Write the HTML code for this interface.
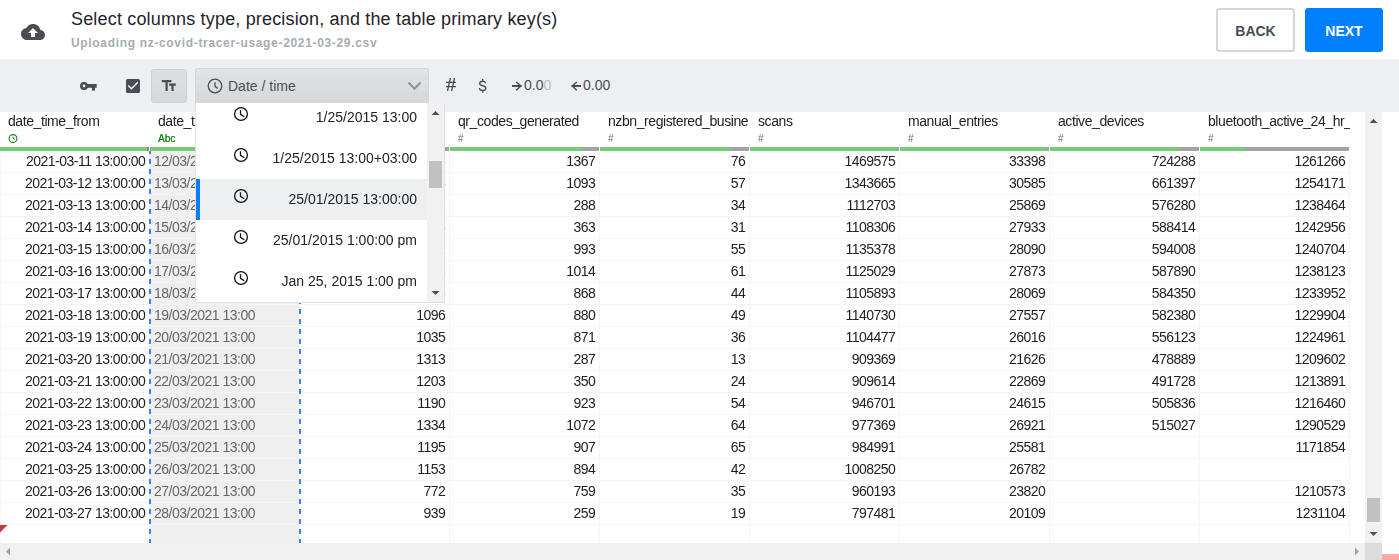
<!DOCTYPE html>
<html><head><meta charset="utf-8"><style>
*{box-sizing:border-box}
html,body{margin:0;padding:0}
body{width:1399px;height:560px;overflow:hidden;position:relative;background:#fff;font-family:"Liberation Sans",sans-serif;color:#222}
.a{position:absolute}
.title{left:71px;top:9px;font-size:18px;letter-spacing:0.17px;color:#1f232b;white-space:nowrap;line-height:20px}
.sub{left:71px;top:35px;font-size:12px;font-weight:bold;letter-spacing:0.67px;color:#a7acb4;white-space:nowrap;line-height:16px}
.btn{top:8px;height:44px;width:79px;border-radius:3px;font-size:14px;font-weight:bold;text-align:center;line-height:42px}
.back{left:1216px;border:2px solid #d3d6dc;color:#474c55;background:#fff}
.next{left:1305px;width:78px;background:#007fff;color:#fff;line-height:46px}
.tb{left:0;top:59px;width:1399px;height:53px;background:#eeeff2;border-top:1px solid #f0f3f6}
.hd{top:112px;height:35px;width:150px;background:#fff;overflow:hidden}
.hn{position:absolute;left:8px;top:1px;font-size:14px;letter-spacing:-0.42px;line-height:16px;white-space:nowrap;color:#222}
.ht{position:absolute;left:8px;top:20px;font-size:10px;line-height:12px;color:#6f6f6f}
.bar{top:147px;height:4px}
.cell{height:22px;width:150px;border-right:1px solid #f4f4f4;border-bottom:1px solid #f4f4f4;font-size:14px;letter-spacing:-0.5px;line-height:21px;white-space:nowrap;overflow:hidden;padding:0 3.6px 0 4px;text-align:right;color:#222}
.c2{background:#efefef;color:#666;text-align:left;padding-left:4px}
.mi{left:196px;width:231px;height:41px;}
.mt{position:absolute;right:10px;top:12px;font-size:14px;line-height:16px;color:#222;white-space:nowrap}
</style></head><body>

<svg class="a" style="left:21px;top:20px" width="24" height="24" viewBox="0 0 24 24"><path fill="#474c55" d="M19.35 10.04C18.67 6.59 15.64 4 12 4 9.11 4 6.6 5.64 5.35 8.04 2.34 8.36 0 10.91 0 14c0 3.31 2.69 6 6 6h13c2.76 0 5-2.24 5-5 0-2.64-2.05-4.78-4.65-4.96z"/><path fill="#fff" d="M14 13v4h-4v-4H7l5-5 5 5h-3z"/></svg>
<div class="a title">Select columns type, precision, and the table primary key(s)</div>
<div class="a sub">Uploading nz-covid-tracer-usage-2021-03-29.csv</div>
<div class="a btn back">BACK</div><div class="a btn next">NEXT</div>
<div class="a tb"></div>
<svg class="a" style="left:76px;top:76px" width="24" height="20" viewBox="0 0 24 20"><circle cx="8" cy="9.9" r="2.7" fill="none" stroke="#474c55" stroke-width="2.6"/><rect x="10.5" y="8" width="10.2" height="3.8" fill="#474c55"/><rect x="16" y="11" width="3" height="3.6" fill="#474c55"/></svg>
<svg class="a" style="left:122px;top:75px" width="22" height="22" viewBox="0 0 22 22"><rect x="4" y="4" width="14" height="14" rx="1.6" fill="#474c55"/><path d="M6.3 10.5L9.4 13.8L15.8 7.3" fill="none" stroke="#fff" stroke-width="1.35"/></svg>
<div class="a" style="left:151px;top:69px;width:36px;height:34px;background:linear-gradient(#dedfe1,#d7d8da);border:1px solid #d0d1d4;border-radius:3px"></div>
<svg class="a" style="left:160.16px;top:77.06px" width="17.64" height="17.64" viewBox="0 0 24 24"><path fill="#474c55" d="M2.5 4v3h5v12h3V7h5V4h-13zm19 5h-9v3h3v7h3v-7h3V9z"/></svg>
<div class="a" style="left:195px;top:68px;width:234px;height:35px;background:linear-gradient(#e2e3e5,#d6d7d9);border:1px solid #d3d4d7;border-bottom:none;border-radius:3px 3px 0 0"></div>
<svg width="16" height="16" viewBox="0 0 16 16" style="position:absolute;left:207px;top:78px"><circle cx="8" cy="8" r="6.8" fill="none" stroke="#4a4f58" stroke-width="1.3"/><path d="M8 4.2V8.3L10.8 10.4" fill="none" stroke="#4a4f58" stroke-width="1.3"/></svg>
<div class="a" style="left:228px;top:78px;font-size:14px;line-height:16px;color:#4a4f58">Date / time</div>
<svg class="a" style="left:407px;top:81px" width="15" height="10" viewBox="0 0 15 10"><path d="M1.5 1.5L7.5 7.7L13.5 1.5" fill="none" stroke="#8896a4" stroke-width="2"/></svg>
<svg class="a" style="left:445px;top:77px" width="12" height="15" viewBox="0 0 12 15"><path d="M5.4 1L2.5 14M9.5 1L6.6 14M1 5.4H11M1 9.6H11" fill="none" stroke="#474c55" stroke-width="1.3"/></svg>
<svg class="a" style="left:478px;top:78px" width="10" height="16" viewBox="0 0 10 16"><path d="M7.7 5.3C7.3 3.8 6.2 3.3 4.7 3.3C2.9 3.3 1.7 4.3 1.7 5.6C1.7 7 3 7.4 4.7 7.8C6.5 8.2 7.8 8.8 7.8 10.3C7.8 11.6 6.6 12.5 4.7 12.5C2.8 12.5 1.6 11.6 1.3 10.2M4.7 1V3.3M4.7 12.5V14.7" fill="none" stroke="#474c55" stroke-width="1.4"/></svg>
<svg class="a" style="left:511px;top:81px" width="12" height="11" viewBox="0 0 12 11"><path d="M1 5H10.5" stroke="#474c55" stroke-width="2"/><path d="M5.2 1L9.7 5L5.2 9.3" fill="none" stroke="#474c55" stroke-width="1.5"/></svg>
<div class="a" style="left:524px;top:77px;font-size:14px;line-height:16px;color:#474c55">0.0<span style="color:#b9bdc3">0</span></div>
<svg class="a" style="left:570px;top:81px" width="12" height="11" viewBox="0 0 12 11"><path d="M1.5 5H11" stroke="#474c55" stroke-width="2"/><path d="M6.8 1L2.3 5L6.8 9.3" fill="none" stroke="#474c55" stroke-width="1.5"/></svg>
<div class="a" style="left:583px;top:77px;font-size:14px;line-height:16px;color:#474c55">0.00</div>
<div class="a" style="left:0;top:0;width:1399px;height:560px;will-change:transform">
<div class="a hd" style="left:0px"><span class="hn">date_time_from</span>
<svg class="a" style="left:8px;top:21px" width="11" height="11" viewBox="0 0 11 11"><circle cx="5" cy="5.5" r="3.9" fill="none" stroke="#1f7f1f" stroke-width="1.1"/><path d="M4.6 4.2L6.6 6.6" fill="none" stroke="#1f7f1f" stroke-width="1.1"/></svg>
</div>
<div class="a bar" style="left:0px;width:147px;background:#74cc74"></div>
<div class="a bar" style="left:147px;width:2px;background:#d9646a"></div>
<div class="a hd" style="left:150px"><span class="hn">date_time_to</span>
<span class="ht" style="color:#1b8c1b;font-size:10px;top:20.5px;text-shadow:0.3px 0 0 #1b8c1b">Abc</span>
</div>
<div class="a bar" style="left:150px;width:149px;background:#74cc74"></div>
<div class="a hd" style="left:300px"><span class="hn">number_of_records</span>
<span class="ht" style="top:20.5px">#</span>
</div>
<div class="a bar" style="left:300px;width:144px;background:#74cc74"></div>
<div class="a bar" style="left:444px;width:5px;background:#a3a3a3"></div>
<div class="a hd" style="left:450px"><span class="hn">qr_codes_generated</span>
<span class="ht" style="top:20.5px">#</span>
</div>
<div class="a bar" style="left:450px;width:132px;background:#74cc74"></div>
<div class="a bar" style="left:582px;width:17px;background:#a3a3a3"></div>
<div class="a hd" style="left:600px"><span class="hn">nzbn_registered_busine</span>
<span class="ht" style="top:20.5px">#</span>
</div>
<div class="a bar" style="left:600px;width:130px;background:#74cc74"></div>
<div class="a bar" style="left:730px;width:19px;background:#a3a3a3"></div>
<div class="a hd" style="left:750px"><span class="hn">scans</span>
<span class="ht" style="top:20.5px">#</span>
</div>
<div class="a bar" style="left:750px;width:147px;background:#74cc74"></div>
<div class="a bar" style="left:897px;width:2px;background:#a3a3a3"></div>
<div class="a hd" style="left:900px"><span class="hn">manual_entries</span>
<span class="ht" style="top:20.5px">#</span>
</div>
<div class="a bar" style="left:900px;width:147px;background:#74cc74"></div>
<div class="a bar" style="left:1047px;width:2px;background:#a3a3a3"></div>
<div class="a hd" style="left:1050px"><span class="hn">active_devices</span>
<span class="ht" style="top:20.5px">#</span>
</div>
<div class="a bar" style="left:1050px;width:129px;background:#74cc74"></div>
<div class="a bar" style="left:1179px;width:20px;background:#a3a3a3"></div>
<div class="a hd" style="left:1200px"><span class="hn">bluetooth_active_24_hr_</span>
<span class="ht" style="top:20.5px">#</span>
</div>
<div class="a bar" style="left:1200px;width:45px;background:#74cc74"></div>
<div class="a bar" style="left:1245px;width:104px;background:#a3a3a3"></div>
<div class="a cell" style="left:0px;top:151px">2021-03-11 13:00:00</div>
<div class="a cell c2" style="left:150px;top:151px">12/03/2021 13:00</div>
<div class="a cell" style="left:300px;top:151px">1405</div>
<div class="a cell" style="left:450px;top:151px">1367</div>
<div class="a cell" style="left:600px;top:151px">76</div>
<div class="a cell" style="left:750px;top:151px">1469575</div>
<div class="a cell" style="left:900px;top:151px">33398</div>
<div class="a cell" style="left:1050px;top:151px">724288</div>
<div class="a cell" style="left:1200px;top:151px">1261266</div>
<div class="a cell" style="left:0px;top:173px">2021-03-12 13:00:00</div>
<div class="a cell c2" style="left:150px;top:173px">13/03/2021 13:00</div>
<div class="a cell" style="left:300px;top:173px">1375</div>
<div class="a cell" style="left:450px;top:173px">1093</div>
<div class="a cell" style="left:600px;top:173px">57</div>
<div class="a cell" style="left:750px;top:173px">1343665</div>
<div class="a cell" style="left:900px;top:173px">30585</div>
<div class="a cell" style="left:1050px;top:173px">661397</div>
<div class="a cell" style="left:1200px;top:173px">1254171</div>
<div class="a cell" style="left:0px;top:195px">2021-03-13 13:00:00</div>
<div class="a cell c2" style="left:150px;top:195px">14/03/2021 13:00</div>
<div class="a cell" style="left:300px;top:195px">1337</div>
<div class="a cell" style="left:450px;top:195px">288</div>
<div class="a cell" style="left:600px;top:195px">34</div>
<div class="a cell" style="left:750px;top:195px">1112703</div>
<div class="a cell" style="left:900px;top:195px">25869</div>
<div class="a cell" style="left:1050px;top:195px">576280</div>
<div class="a cell" style="left:1200px;top:195px">1238464</div>
<div class="a cell" style="left:0px;top:217px">2021-03-14 13:00:00</div>
<div class="a cell c2" style="left:150px;top:217px">15/03/2021 13:00</div>
<div class="a cell" style="left:300px;top:217px">1265</div>
<div class="a cell" style="left:450px;top:217px">363</div>
<div class="a cell" style="left:600px;top:217px">31</div>
<div class="a cell" style="left:750px;top:217px">1108306</div>
<div class="a cell" style="left:900px;top:217px">27933</div>
<div class="a cell" style="left:1050px;top:217px">588414</div>
<div class="a cell" style="left:1200px;top:217px">1242956</div>
<div class="a cell" style="left:0px;top:239px">2021-03-15 13:00:00</div>
<div class="a cell c2" style="left:150px;top:239px">16/03/2021 13:00</div>
<div class="a cell" style="left:300px;top:239px">1241</div>
<div class="a cell" style="left:450px;top:239px">993</div>
<div class="a cell" style="left:600px;top:239px">55</div>
<div class="a cell" style="left:750px;top:239px">1135378</div>
<div class="a cell" style="left:900px;top:239px">28090</div>
<div class="a cell" style="left:1050px;top:239px">594008</div>
<div class="a cell" style="left:1200px;top:239px">1240704</div>
<div class="a cell" style="left:0px;top:261px">2021-03-16 13:00:00</div>
<div class="a cell c2" style="left:150px;top:261px">17/03/2021 13:00</div>
<div class="a cell" style="left:300px;top:261px">1273</div>
<div class="a cell" style="left:450px;top:261px">1014</div>
<div class="a cell" style="left:600px;top:261px">61</div>
<div class="a cell" style="left:750px;top:261px">1125029</div>
<div class="a cell" style="left:900px;top:261px">27873</div>
<div class="a cell" style="left:1050px;top:261px">587890</div>
<div class="a cell" style="left:1200px;top:261px">1238123</div>
<div class="a cell" style="left:0px;top:283px">2021-03-17 13:00:00</div>
<div class="a cell c2" style="left:150px;top:283px">18/03/2021 13:00</div>
<div class="a cell" style="left:300px;top:283px">1195</div>
<div class="a cell" style="left:450px;top:283px">868</div>
<div class="a cell" style="left:600px;top:283px">44</div>
<div class="a cell" style="left:750px;top:283px">1105893</div>
<div class="a cell" style="left:900px;top:283px">28069</div>
<div class="a cell" style="left:1050px;top:283px">584350</div>
<div class="a cell" style="left:1200px;top:283px">1233952</div>
<div class="a cell" style="left:0px;top:305px">2021-03-18 13:00:00</div>
<div class="a cell c2" style="left:150px;top:305px">19/03/2021 13:00</div>
<div class="a cell" style="left:300px;top:305px">1096</div>
<div class="a cell" style="left:450px;top:305px">880</div>
<div class="a cell" style="left:600px;top:305px">49</div>
<div class="a cell" style="left:750px;top:305px">1140730</div>
<div class="a cell" style="left:900px;top:305px">27557</div>
<div class="a cell" style="left:1050px;top:305px">582380</div>
<div class="a cell" style="left:1200px;top:305px">1229904</div>
<div class="a cell" style="left:0px;top:327px">2021-03-19 13:00:00</div>
<div class="a cell c2" style="left:150px;top:327px">20/03/2021 13:00</div>
<div class="a cell" style="left:300px;top:327px">1035</div>
<div class="a cell" style="left:450px;top:327px">871</div>
<div class="a cell" style="left:600px;top:327px">36</div>
<div class="a cell" style="left:750px;top:327px">1104477</div>
<div class="a cell" style="left:900px;top:327px">26016</div>
<div class="a cell" style="left:1050px;top:327px">556123</div>
<div class="a cell" style="left:1200px;top:327px">1224961</div>
<div class="a cell" style="left:0px;top:349px">2021-03-20 13:00:00</div>
<div class="a cell c2" style="left:150px;top:349px">21/03/2021 13:00</div>
<div class="a cell" style="left:300px;top:349px">1313</div>
<div class="a cell" style="left:450px;top:349px">287</div>
<div class="a cell" style="left:600px;top:349px">13</div>
<div class="a cell" style="left:750px;top:349px">909369</div>
<div class="a cell" style="left:900px;top:349px">21626</div>
<div class="a cell" style="left:1050px;top:349px">478889</div>
<div class="a cell" style="left:1200px;top:349px">1209602</div>
<div class="a cell" style="left:0px;top:371px">2021-03-21 13:00:00</div>
<div class="a cell c2" style="left:150px;top:371px">22/03/2021 13:00</div>
<div class="a cell" style="left:300px;top:371px">1203</div>
<div class="a cell" style="left:450px;top:371px">350</div>
<div class="a cell" style="left:600px;top:371px">24</div>
<div class="a cell" style="left:750px;top:371px">909614</div>
<div class="a cell" style="left:900px;top:371px">22869</div>
<div class="a cell" style="left:1050px;top:371px">491728</div>
<div class="a cell" style="left:1200px;top:371px">1213891</div>
<div class="a cell" style="left:0px;top:393px">2021-03-22 13:00:00</div>
<div class="a cell c2" style="left:150px;top:393px">23/03/2021 13:00</div>
<div class="a cell" style="left:300px;top:393px">1190</div>
<div class="a cell" style="left:450px;top:393px">923</div>
<div class="a cell" style="left:600px;top:393px">54</div>
<div class="a cell" style="left:750px;top:393px">946701</div>
<div class="a cell" style="left:900px;top:393px">24615</div>
<div class="a cell" style="left:1050px;top:393px">505836</div>
<div class="a cell" style="left:1200px;top:393px">1216460</div>
<div class="a cell" style="left:0px;top:415px">2021-03-23 13:00:00</div>
<div class="a cell c2" style="left:150px;top:415px">24/03/2021 13:00</div>
<div class="a cell" style="left:300px;top:415px">1334</div>
<div class="a cell" style="left:450px;top:415px">1072</div>
<div class="a cell" style="left:600px;top:415px">64</div>
<div class="a cell" style="left:750px;top:415px">977369</div>
<div class="a cell" style="left:900px;top:415px">26921</div>
<div class="a cell" style="left:1050px;top:415px">515027</div>
<div class="a cell" style="left:1200px;top:415px">1290529</div>
<div class="a cell" style="left:0px;top:437px">2021-03-24 13:00:00</div>
<div class="a cell c2" style="left:150px;top:437px">25/03/2021 13:00</div>
<div class="a cell" style="left:300px;top:437px">1195</div>
<div class="a cell" style="left:450px;top:437px">907</div>
<div class="a cell" style="left:600px;top:437px">65</div>
<div class="a cell" style="left:750px;top:437px">984991</div>
<div class="a cell" style="left:900px;top:437px">25581</div>
<div class="a cell" style="left:1050px;top:437px"></div>
<div class="a cell" style="left:1200px;top:437px">1171854</div>
<div class="a cell" style="left:0px;top:459px">2021-03-25 13:00:00</div>
<div class="a cell c2" style="left:150px;top:459px">26/03/2021 13:00</div>
<div class="a cell" style="left:300px;top:459px">1153</div>
<div class="a cell" style="left:450px;top:459px">894</div>
<div class="a cell" style="left:600px;top:459px">42</div>
<div class="a cell" style="left:750px;top:459px">1008250</div>
<div class="a cell" style="left:900px;top:459px">26782</div>
<div class="a cell" style="left:1050px;top:459px"></div>
<div class="a cell" style="left:1200px;top:459px"></div>
<div class="a cell" style="left:0px;top:481px">2021-03-26 13:00:00</div>
<div class="a cell c2" style="left:150px;top:481px">27/03/2021 13:00</div>
<div class="a cell" style="left:300px;top:481px">772</div>
<div class="a cell" style="left:450px;top:481px">759</div>
<div class="a cell" style="left:600px;top:481px">35</div>
<div class="a cell" style="left:750px;top:481px">960193</div>
<div class="a cell" style="left:900px;top:481px">23820</div>
<div class="a cell" style="left:1050px;top:481px"></div>
<div class="a cell" style="left:1200px;top:481px">1210573</div>
<div class="a cell" style="left:0px;top:503px">2021-03-27 13:00:00</div>
<div class="a cell c2" style="left:150px;top:503px">28/03/2021 13:00</div>
<div class="a cell" style="left:300px;top:503px">939</div>
<div class="a cell" style="left:450px;top:503px">259</div>
<div class="a cell" style="left:600px;top:503px">19</div>
<div class="a cell" style="left:750px;top:503px">797481</div>
<div class="a cell" style="left:900px;top:503px">20109</div>
<div class="a cell" style="left:1050px;top:503px"></div>
<div class="a cell" style="left:1200px;top:503px">1231104</div>
<div class="a cell" style="left:0px;top:525px;height:18px;border-bottom:none"></div>
<div class="a cell c2" style="left:150px;top:525px;height:18px;border-bottom:none"></div>
<div class="a cell" style="left:300px;top:525px;height:18px;border-bottom:none"></div>
<div class="a cell" style="left:450px;top:525px;height:18px;border-bottom:none"></div>
<div class="a cell" style="left:600px;top:525px;height:18px;border-bottom:none"></div>
<div class="a cell" style="left:750px;top:525px;height:18px;border-bottom:none"></div>
<div class="a cell" style="left:900px;top:525px;height:18px;border-bottom:none"></div>
<div class="a cell" style="left:1050px;top:525px;height:18px;border-bottom:none"></div>
<div class="a cell" style="left:1200px;top:525px;height:18px;border-bottom:none"></div>
<div class="a" style="left:0;top:151px;width:1px;height:392px;background:#f5f5f5"></div>
<div class="a" style="left:149px;top:151px;width:2px;height:392px;background:repeating-linear-gradient(to bottom,#3b82f6 0,#3b82f6 5px,transparent 5px,transparent 10px);background-position:0 -2px"></div>
<div class="a" style="left:299px;top:151px;width:2px;height:392px;background:repeating-linear-gradient(to bottom,#3b82f6 0,#3b82f6 5px,transparent 5px,transparent 10px);background-position:0 -2px"></div>
<svg class="a" style="left:0;top:525px" width="8" height="8"><path d="M0 0H7.5L0 7.5Z" fill="#c5393f"/></svg>
<div class="a" style="left:1365px;top:112px;width:17px;height:431px;background:#f1f1f1"></div>
<svg class="a" style="left:1369px;top:118px" width="9" height="6"><path d="M0.5 5H8.5L4.5 1Z" fill="#505050"/></svg>
<svg class="a" style="left:1369px;top:531px" width="9" height="6"><path d="M0.5 1H8.5L4.5 5Z" fill="#505050"/></svg>
<div class="a" style="left:1367px;top:498px;width:13px;height:24px;background:#c1c1c1"></div>
<div class="a" style="left:0;top:543px;width:1365px;height:17px;background:#f1f1f1"></div>
<svg class="a" style="left:5px;top:547px" width="6" height="9"><path d="M5 0.5V8.5L1 4.5Z" fill="#a3a3a3"/></svg>
<svg class="a" style="left:1354px;top:547px" width="6" height="9"><path d="M1 0.5V8.5L5 4.5Z" fill="#a3a3a3"/></svg>
<div class="a" style="left:1365px;top:543px;width:17px;height:17px;background:#dcdcdc"></div>
<div class="a" style="left:1382px;top:554px;width:17px;height:6px;background:#ffa8a8"></div>
<div class="a" style="left:195px;top:103px;width:250px;height:200px;background:#fff;border:1px solid #d9e1ea;border-top:none"></div>
<div class="a" style="left:196px;top:103px;width:231px;height:199px;overflow:hidden">
<div class="a" style="left:0;top:-6px;width:231px;height:41px;background:#fff">
<svg class="a" style="left:37px;top:9px" width="16" height="16" viewBox="0 0 16 16"><circle cx="8" cy="8" r="6.4" fill="none" stroke="#111" stroke-width="1.3"/><path d="M7.5 4.3V8.3L11.3 10.7" fill="none" stroke="#111" stroke-width="1.3"/></svg>
<span class="mt">1/25/2015 13:00</span></div>
<div class="a" style="left:0;top:35px;width:231px;height:41px;background:#fff">
<svg class="a" style="left:37px;top:9px" width="16" height="16" viewBox="0 0 16 16"><circle cx="8" cy="8" r="6.4" fill="none" stroke="#111" stroke-width="1.3"/><path d="M7.5 4.3V8.3L11.3 10.7" fill="none" stroke="#111" stroke-width="1.3"/></svg>
<span class="mt">1/25/2015 13:00+03:00</span></div>
<div class="a" style="left:0;top:76px;width:231px;height:41px;background:#eeeff1">
<div class="a" style="left:0;top:0;width:4px;height:41px;background:#0a7cff"></div>
<svg class="a" style="left:37px;top:9px" width="16" height="16" viewBox="0 0 16 16"><circle cx="8" cy="8" r="6.4" fill="none" stroke="#111" stroke-width="1.3"/><path d="M7.5 4.3V8.3L11.3 10.7" fill="none" stroke="#111" stroke-width="1.3"/></svg>
<span class="mt">25/01/2015 13:00:00</span></div>
<div class="a" style="left:0;top:117px;width:231px;height:41px;background:#fff">
<svg class="a" style="left:37px;top:9px" width="16" height="16" viewBox="0 0 16 16"><circle cx="8" cy="8" r="6.4" fill="none" stroke="#111" stroke-width="1.3"/><path d="M7.5 4.3V8.3L11.3 10.7" fill="none" stroke="#111" stroke-width="1.3"/></svg>
<span class="mt">25/01/2015 1:00:00 pm</span></div>
<div class="a" style="left:0;top:158px;width:231px;height:41px;background:#fff">
<svg class="a" style="left:37px;top:9px" width="16" height="16" viewBox="0 0 16 16"><circle cx="8" cy="8" r="6.4" fill="none" stroke="#111" stroke-width="1.3"/><path d="M7.5 4.3V8.3L11.3 10.7" fill="none" stroke="#111" stroke-width="1.3"/></svg>
<span class="mt">Jan 25, 2015 1:00 pm</span></div>
</div>
<div class="a" style="left:427px;top:103px;width:17px;height:199px;background:#f1f1f1"></div>
<svg class="a" style="left:431px;top:110px" width="9" height="6"><path d="M0.5 5H8.5L4.5 1Z" fill="#505050"/></svg>
<svg class="a" style="left:431px;top:290px" width="9" height="6"><path d="M0.5 1H8.5L4.5 5Z" fill="#505050"/></svg>
<div class="a" style="left:429px;top:161px;width:13px;height:27px;background:#c1c1c1"></div>
</div>
</body></html>
